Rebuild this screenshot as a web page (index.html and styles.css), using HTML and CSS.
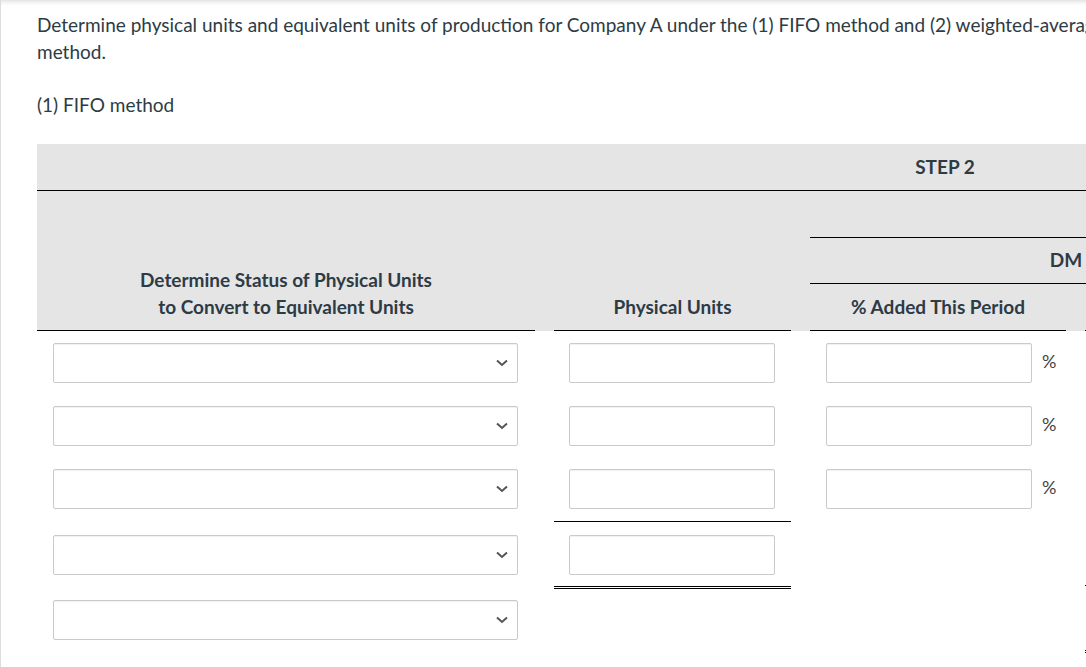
FILE: index.html
```html
<!DOCTYPE html>
<html lang="en">
<head>
<meta charset="utf-8">
<title>FIFO method</title>
<link rel="stylesheet" href="styles.css">
</head>
<body>
<div class="page">
  <div class="content">
    <p class="question">Determine physical units and equivalent units of production for Company A under the (1) FIFO method and (2) weighted-average method.</p>
    <p class="part">(1) FIFO method</p>

    <div class="table">
      <div class="head">
        <div class="h1-row">
          <div class="h1-step">STEP 2</div>
        </div>
        <div class="h2-row">
          <div class="h-main h-status">Determine Status of Physical Units<br>to Convert to Equivalent Units</div>
          <div class="h-main h-pu">Physical Units</div>
          <div class="h-top"></div>
          <div class="h-group h-dm">DM</div>
          <div class="h-group h-cc">CC</div>
          <div class="h-sub h-c3">% Added This Period</div>
          <div class="h-sub h-c4">Equivalent Units</div>
          <div class="h-sub h-c5">% Added This Period</div>
          <div class="h-sub h-c6">Equivalent Units</div>
        </div>
      </div>

      <div class="body">
        <!-- row 1 -->
        <div class="cell c1 r1"><div class="select"><svg class="chev" width="12" height="8" viewBox="0 0 12 8"><path d="M1 1.5 L6 6 L11 1.5" fill="none" stroke="#555" stroke-width="2"/></svg></div></div>
        <div class="cell c2 r1"><div class="input"></div></div>
        <div class="cell c3 r1"><div class="input pct-input"></div><span class="pct">%</span></div>
        <div class="cell c4 r1"></div>

        <!-- row 2 -->
        <div class="cell c1 r2"><div class="select"><svg class="chev" width="12" height="8" viewBox="0 0 12 8"><path d="M1 1.5 L6 6 L11 1.5" fill="none" stroke="#555" stroke-width="2"/></svg></div></div>
        <div class="cell c2 r2"><div class="input"></div></div>
        <div class="cell c3 r2"><div class="input pct-input"></div><span class="pct">%</span></div>
        <div class="cell c4 r2"></div>

        <!-- row 3 -->
        <div class="cell c1 r3"><div class="select"><svg class="chev" width="12" height="8" viewBox="0 0 12 8"><path d="M1 1.5 L6 6 L11 1.5" fill="none" stroke="#555" stroke-width="2"/></svg></div></div>
        <div class="cell c2 r3 sum-line"><div class="input"></div></div>
        <div class="cell c3 r3"><div class="input pct-input"></div><span class="pct">%</span></div>
        <div class="cell c4 r3"></div>

        <!-- row 4 -->
        <div class="cell c1 r4"><div class="select"><svg class="chev" width="12" height="8" viewBox="0 0 12 8"><path d="M1 1.5 L6 6 L11 1.5" fill="none" stroke="#555" stroke-width="2"/></svg></div></div>
        <div class="cell c2 r4 total-line"><div class="input"></div></div>
        <div class="cell c3 r4"></div>
        <div class="cell c4 r4 c4-line"></div>

        <!-- row 5 -->
        <div class="cell c1 r5"><div class="select"><svg class="chev" width="12" height="8" viewBox="0 0 12 8"><path d="M1 1.5 L6 6 L11 1.5" fill="none" stroke="#555" stroke-width="2"/></svg></div></div>
        <div class="cell c2 r5"></div>
        <div class="cell c3 r5"></div>
        <div class="cell c4 r5 c4-double"></div>
      </div>
    </div>
  </div>
</div>
</body>
</html>
```

FILE: styles.css
```css
html, body {
  margin: 0;
  padding: 0;
  overflow: hidden;
  background: #fff;
}

body {
  font-family: Lato, "Open Sans", "Liberation Sans", sans-serif;
  color: #2d3b45;
  font-size: 19px;
  line-height: 27px;
}

.page {
  min-height: 667px;
  border-left: 1px solid #dcdcdc;
  background: linear-gradient(to bottom, #e4e4e4 0, #f6f6f6 3px, #ffffff 6px);
}

.content {
  width: 1100px;
  padding: 11px 0 0 36px;
}

.question {
  margin: 0 0 26px;
}

.part {
  margin: 0 0 26px;
}

.table {
  width: 1816px;
}

/* header */
.head {
  background: #e5e5e5;
  font-weight: 700;
}

.h1-row {
  display: grid;
  grid-template-columns: 498px 237px 256px 237px 256px 237px;
  column-gap: 19px;
  height: 46px;
  border-bottom: 1px solid #000;
}

.h1-step {
  grid-column: 2 / 5;
  display: flex;
  align-items: center;
  justify-content: center;
  padding-left: 14px;
  padding-bottom: 2px;
}

.h2-row {
  display: grid;
  grid-template-columns: 498px 237px 256px 237px 256px 237px;
  grid-template-rows: 47px 46px 47px;
  column-gap: 19px;
}

.h-main {
  grid-row: 1 / 4;
  display: flex;
  flex-direction: column;
  justify-content: flex-end;
  text-align: center;
  padding-bottom: 10px;
  border-bottom: 1px solid #000;
}

.h-status { grid-column: 1; }
.h-pu { grid-column: 2; }

.h-top {
  grid-column: 3 / -1;
  grid-row: 1;
  border-bottom: 1px solid #000;
}

.h-group {
  grid-row: 2;
  display: flex;
  align-items: center;
  justify-content: center;
  padding-bottom: 2px;
  border-bottom: 1px solid #000;
}

.h-dm { grid-column: 3 / 5; margin-right: -19px; padding-right: 19px; }
.h-cc { grid-column: 5 / 7; }

.h-sub {
  grid-row: 3;
  display: flex;
  align-items: center;
  justify-content: center;
  padding-bottom: 2px;
  border-bottom: 1px solid #000;
  white-space: nowrap;
}

.h-c3 { grid-column: 3; }
.h-c4 { grid-column: 4; }
.h-c5 { grid-column: 5; }
.h-c6 { grid-column: 6; }

/* body */
.body {
  display: grid;
  grid-template-columns: 498px 237px 256px 237px;
  column-gap: 19px;
  align-items: start;
}

.cell {
  box-sizing: border-box;
  display: flex;
  align-items: center;
}

.c1 { grid-column: 1; padding: 12px 17px 11px 16px; }
.c2 { grid-column: 2; padding: 12px 16px 11px 15px; }
.c3 { grid-column: 3; padding: 12px 0 11px 16px; }
.c4 { grid-column: 4; }

.r1 { grid-row: 1; }
.r2 { grid-row: 2; }
.r3 { grid-row: 3; }
.r4 { grid-row: 4; }
.r5 { grid-row: 5; }

.r4.c1, .r4.c2 { padding-top: 13px; }
.r5.c1 { padding-top: 11px; }

.c4.r4, .c4.r5 { height: 64px; }

.sum-line {
  padding-bottom: 12px;
  border-bottom: 1px solid #000;
}

.total-line {
  border-bottom: 3px double #000;
}

.c4-line { border-bottom: 1px solid #000; }
.c4-double { border-bottom: 3px double #000; }

.select,
.input {
  box-sizing: border-box;
  height: 40px;
  background: #fff;
  border: 1px solid #cacaca;
  border-radius: 2px;
  box-shadow: inset 0 1px 1px rgba(0, 0, 0, 0.06);
}

.select {
  width: 100%;
  display: flex;
  align-items: center;
  justify-content: flex-end;
  padding-right: 9px;
}

.chev {
  display: block;
}

.input {
  width: 206px;
}

.pct-input {
  width: 206px;
}

.pct {
  margin-left: 10px;
  margin-bottom: 3px;
  font-size: 18px;
  color: #444;
}
```
